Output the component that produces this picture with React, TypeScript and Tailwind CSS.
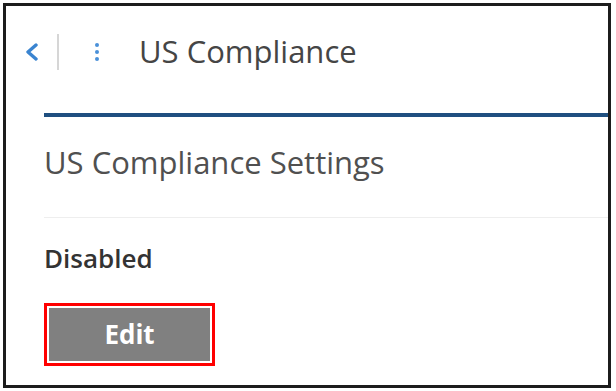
export default function App() {
  return (
    <div className="w-[616px] h-[391px] bg-white" style={{ fontFamily: '"Open Sans", sans-serif' }}>
      <div className="ml-[3px] mt-[3px] w-[608px] h-[385px] border-[3px] border-[#1c1c1c] bg-white overflow-hidden flex flex-col">
        <div className="flex items-center h-[107px] pl-[18px] pb-[16px] shrink-0">
          <svg width="15" height="18" viewBox="0 0 15 18" fill="none">
            <polyline
              points="12,2 4,9 12,16"
              stroke="#3a84d0"
              strokeWidth="3.4"
              strokeLinecap="round"
              strokeLinejoin="round"
            />
          </svg>
          <div className="ml-[18px] w-[2px] h-[36px] bg-[#d6d6d6]" />
          <div className="ml-[36px] flex flex-col gap-[3px]">
            <span className="w-[4px] h-[4px] rounded-full bg-[#4a90d9]" />
            <span className="w-[4px] h-[4px] rounded-full bg-[#4a90d9]" />
            <span className="w-[4px] h-[4px] rounded-full bg-[#4a90d9]" />
          </div>
          <h1 className="ml-[40px] text-[31px] leading-none text-[#454545]">US Compliance</h1>
        </div>
        <div className="ml-[38px] h-[4px] bg-[#1f4f80] shrink-0" />
        <div className="ml-[38px]">
          <h2 className="pt-[25px] h-[100px] text-[31px] leading-[40px] text-[#505050]">US Compliance Settings</h2>
          <div className="h-[1px] bg-[#eeeeee]" />
          <p className="pt-[25px] text-[26px] font-semibold text-[#333333] leading-[30px]">Disabled</p>
          <div className="mt-[30px] w-[171px] h-[63px] border-[3px] border-[#ff0000] p-[2px]">
            <div className="w-full h-full bg-[#808080] flex items-center justify-center text-white text-[26px] font-bold">
              Edit
            </div>
          </div>
        </div>
      </div>
    </div>
  )
}
